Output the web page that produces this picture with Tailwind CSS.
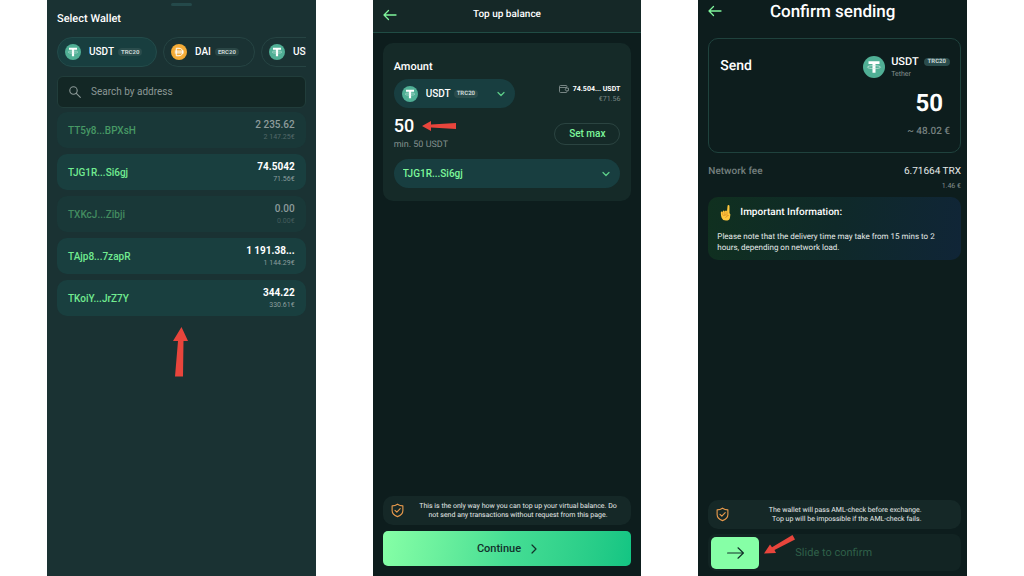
<!DOCTYPE html>
<html lang="en">
    <head>
        <meta charset="UTF-8">
        <meta name="viewport" content="width=device-width, initial-scale=1.0">
        <title>Wallet top up</title>
        <script src="https://cdn.jsdelivr.net/npm/@tailwindcss/browser@4"></script>
    </head>
    <body class="bg-white font-['Roboto','Noto_Sans',sans-serif] text-white [text-rendering:geometricPrecision]">

        <!-- shared icons -->
        <svg class="hidden">
            <symbol id="tether" viewBox="0 0 32 32">
                <circle cx="16" cy="16" r="16" fill="#50af95"/>
                <path fill="#fff" d="M8 7.5h16v4h-5.800v13h-4.400v-13H8z"/>
                <ellipse cx="16" cy="16.200" rx="9.600" ry="2.200" fill="none" stroke="#d5eee6" stroke-width="1"/>
            </symbol>
            <symbol id="dai" viewBox="0 0 32 32">
                <circle cx="16" cy="16" r="16" fill="#f5ac37"/>
                <path fill="none" stroke="#fff" stroke-width="2" d="M10.500 8.500H16c4.500 0 7.500 3 7.500 7.500s-3 7.500-7.500 7.500h-5.500zM7.500 14.200h18M7.500 17.800h18"/>
            </symbol>
            <symbol id="back" viewBox="0 0 14 12">
                <path fill="none" stroke="#7ff59c" stroke-width="1.300" stroke-linecap="round" stroke-linejoin="round" d="M13 6H1M5.500 1.500L1 6l4.500 4.500"/>
            </symbol>
            <symbol id="chevron" viewBox="0 0 8 6">
                <path fill="none" stroke="#5fd08a" stroke-width="1.200" stroke-linecap="round" stroke-linejoin="round" d="M1 1.500l3 3 3-3"/>
            </symbol>
            <symbol id="shield" viewBox="0 0 14 16">
                <g fill="none" stroke="#e99a4c" stroke-width="1.200" stroke-linecap="round" stroke-linejoin="round">
                    <path d="M7 1.200C5.300 2.400 3.300 3 1.200 3v5c0 3.200 2.400 5.400 5.800 6.600 3.400-1.200 5.800-3.400 5.800-6.600V3C10.700 3 8.700 2.400 7 1.200z"/>
                    <path d="M4.300 7.800l2 2 3.600-3.800"/>
                </g>
            </symbol>
        </svg>

        <div class="grid min-h-screen grid-cols-3 gap-[57px] pl-[47px] pr-[57px]">

            <!-- select wallet -->
            <section class="flex min-w-0 flex-col bg-[#1a3233] px-[10px] pt-[3px]">
                <div class="h-[3px] w-[21px] self-center rounded-full bg-[#24494a]"></div>
                <h2 class="mt-[5px] text-[11px] leading-4 font-medium">Select Wallet</h2>

                <div class="mt-[10px] flex gap-[6px] overflow-hidden">
                    <button class="flex h-[30px] w-[100px] shrink-0 items-center rounded-full border border-[#234b4a] bg-[#183e3f] pl-[7px]">
                        <svg class="size-4"><use href="#tether"/></svg>
                        <span class="ml-2 text-[10px] leading-4 font-medium">USDT</span>
                        <span class="ml-1 rounded-full bg-[#2a4c4c] px-[3px] text-[6px] leading-2 font-bold text-[#c9d5d4]">TRC20</span>
                    </button>
                    <button class="flex h-[30px] w-[92px] shrink-0 items-center rounded-full border border-[#264443] pl-[7px]">
                        <svg class="size-4"><use href="#dai"/></svg>
                        <span class="ml-2 text-[10px] leading-4 font-medium">DAI</span>
                        <span class="ml-1 rounded-full bg-[#2a4645] px-[3px] text-[6px] leading-2 font-bold text-[#c9d5d4]">ERC20</span>
                    </button>
                    <button class="flex h-[30px] w-[100px] shrink-0 items-center rounded-full border border-[#264443] pl-[7px]">
                        <svg class="size-4"><use href="#tether"/></svg>
                        <span class="ml-2 text-[10px] leading-4 font-medium">USDT</span>
                    </button>
                </div>

                <label class="mt-[9px] flex h-8 items-center rounded-md border border-[#213d3b] bg-[#132725] pl-[11px]">
                    <svg class="size-3 shrink-0" viewBox="0 0 12 12" fill="none" stroke="#8d9a98" stroke-width="1.100" stroke-linecap="round"><circle cx="4.500" cy="4.500" r="3.700"/><path d="M7.300 7.300l4 4"/></svg>
                    <input type="text" aria-label="Search by address" placeholder="Search by address" class="ml-[10px] min-w-0 flex-1 text-[10px] leading-4 outline-none placeholder:text-[#8b9795]">
                </label>

                <div class="mt-1 flex flex-col gap-[6px]">
                    <button class="flex h-9 items-center justify-between rounded-[10px] bg-[#193838] px-[11px]">
                        <span class="text-[10px] font-medium text-[#479965]">TT5y8...BPXsH</span>
                        <span class="flex flex-col text-right"><span class="text-[10px] leading-[13px] font-medium text-[#8d9b9b]">2 235.62</span><span class="text-[7px] leading-3 text-[#536969]">2 147.25€</span></span>
                    </button>
                    <button class="flex h-9 items-center justify-between rounded-[10px] bg-[#193f3f] px-[11px]">
                        <span class="text-[10px] font-medium text-[#72ec91]">TJG1R...Si6gj</span>
                        <span class="flex flex-col text-right"><span class="text-[10px] leading-[13px] font-bold">74.5042</span><span class="text-[7px] leading-3 text-[#8b9e9e]">71.56€</span></span>
                    </button>
                    <button class="flex h-9 items-center justify-between rounded-[10px] bg-[#193838] px-[11px]">
                        <span class="text-[10px] font-medium text-[#438c60]">TXKcJ...Zibji</span>
                        <span class="flex flex-col text-right"><span class="text-[10px] leading-[13px] font-medium text-[#8d9b9b]">0.00</span><span class="text-[7px] leading-3 text-[#455d5d]">0.00€</span></span>
                    </button>
                    <button class="flex h-9 items-center justify-between rounded-[10px] bg-[#193f3f] px-[11px]">
                        <span class="text-[10px] font-medium text-[#72ec91]">TAjp8...7zapR</span>
                        <span class="flex flex-col text-right"><span class="text-[10px] leading-[13px] font-bold">1 191.38...</span><span class="text-[7px] leading-3 text-[#8b9e9e]">1 144.29€</span></span>
                    </button>
                    <button class="flex h-9 items-center justify-between rounded-[10px] bg-[#193f3f] px-[11px]">
                        <span class="text-[10px] font-medium text-[#72ec91]">TKoiY...JrZ7Y</span>
                        <span class="flex flex-col text-right"><span class="text-[10px] leading-[13px] font-bold">344.22</span><span class="text-[7px] leading-3 text-[#8b9e9e]">330.61€</span></span>
                    </button>
                </div>

                <svg class="mt-[11px] h-[50px] w-4 self-center" viewBox="0 0 16 50"><path fill="#e8453c" d="M8.500 0L15 14H10.500L10 49.500H2L5 14H0z"/></svg>
            </section>

            <!-- top up balance -->
            <section class="flex min-w-0 flex-col bg-[#0d1d1d]">
                <header class="grid h-[33px] grid-cols-[14px_1fr_14px] items-center border-b border-[#204c44] bg-[#152827] px-[10px] pb-[2px]">
                    <a href="#" aria-label="Back"><svg class="h-3 w-[14px]"><use href="#back"/></svg></a>
                    <h2 class="text-center text-[10px] leading-4 font-medium">Top up balance</h2>
                </header>

                <div class="mx-[10px] mt-[10px] rounded-[10px] bg-[#152a28] px-[11px] pt-4 pb-[13px]">
                    <label for="amount" class="block text-[11px] leading-4 font-medium">Amount</label>

                    <div class="mt-1 flex items-center justify-between">
                        <div class="relative h-[29px] w-[121px]">
                            <select aria-label="Currency" class="size-full appearance-none rounded-full bg-[#183e40] pl-8 text-[10px] font-medium outline-none">
                                <option>USDT</option>
                            </select>
                            <div class="pointer-events-none absolute inset-0 flex items-center pr-[10px] pl-2">
                                <svg class="size-4"><use href="#tether"/></svg>
                                <span class="ml-9 rounded-full bg-[#2a4c4c] px-[3px] text-[6px] leading-2 font-bold text-[#c9d5d4]">TRC20</span>
                                <svg class="ml-auto h-[6px] w-2"><use href="#chevron"/></svg>
                            </div>
                        </div>
                        <div class="text-right">
                            <div class="flex items-center gap-1 text-[7px] leading-[10px] font-bold">
                                <svg class="h-2 w-[10px]" viewBox="0 0 10 8" fill="none" stroke="#82908e" stroke-width="0.900"><path d="M8 2.500V1.500Q8 .5 7 .5H1.500Q.5.500.5 1.500v5q0 1 1 1H7q1 0 1-1V6M.5 2.500H8M9.500 3.200H7.500a1.200 1.200 0 000 2.500h2z"/></svg>
                                74.504... USDT
                            </div>
                            <div class="text-[7px] leading-[10px] text-[#7c8987]">€71.56</div>
                        </div>
                    </div>

                    <div class="mt-2 flex items-center justify-between">
                        <div>
                            <div class="flex items-center gap-[6px]">
                                <input id="amount" type="text" value="50" class="h-5 w-[22px] text-[18px] leading-5 font-medium outline-none">
                                <svg class="h-[10px] w-[34px]" viewBox="0 0 34 10"><path fill="#e8453c" d="M0 5L9 0V3.500L34 2V8L9 6.500V10z"/></svg>
                            </div>
                            <div class="mt-1 text-[9px] leading-[11px] text-[#84918f]">min. 50 USDT</div>
                        </div>
                        <button class="h-[22px] w-[66px] rounded-full border border-[#2b4441] text-[10px] leading-4 font-medium text-[#7df79b]">Set max</button>
                    </div>

                    <div class="relative mt-2 h-[29px]">
                        <select aria-label="Wallet address" class="size-full appearance-none rounded-full bg-[#183e40] pl-[9px] text-[10px] font-medium text-[#7df79b] outline-none">
                            <option>TJG1R...Si6gj</option>
                        </select>
                        <div class="pointer-events-none absolute inset-0 flex items-center justify-end pr-[10px]">
                            <svg class="h-[6px] w-2"><use href="#chevron"/></svg>
                        </div>
                    </div>
                </div>

                <div class="mx-[10px] mt-auto flex h-[29px] items-center rounded-[10px] bg-[#152827] pr-[7px] pl-2">
                    <svg class="h-[15px] w-[13px] shrink-0"><use href="#shield"/></svg>
                    <p class="ml-2 flex-1 text-center text-[7px] leading-[9px] text-[#e6ebea]">This is the only way how you can top up your virtual balance. Do<br>not send any transactions without request from this page.</p>
                </div>
                <button class="mx-[10px] mt-[6px] mb-[10px] flex h-[35px] items-center justify-center gap-[10px] rounded-[5px] bg-linear-100 from-[#86ffa6] via-[#45de94] to-[#12c583] text-[11px] leading-4 font-medium text-[#12312a]">
                    Continue
                    <svg class="h-[10px] w-[6px]" viewBox="0 0 6 10" fill="none" stroke="#12312a" stroke-width="1.200" stroke-linecap="round" stroke-linejoin="round"><path d="M1 1l4 4-4 4"/></svg>
                </button>
            </section>

            <!-- confirm sending -->
            <section class="flex min-w-0 flex-col bg-[#0d1d1d] pb-[5px]">
                <header class="grid h-[38px] grid-cols-[14px_1fr_14px] px-[10px]">
                    <a href="#" aria-label="Back" class="pt-[5px]"><svg class="h-3 w-[14px]"><use href="#back"/></svg></a>
                    <h2 class="text-center text-[17px] leading-6 font-medium">Confirm sending</h2>
                </header>

                <div class="mr-[6px] ml-[10px] flex h-[115px] justify-between rounded-[10px] border border-[#1f423d] pt-4 pr-[10px] pl-[11px]">
                    <h3 class="text-[14px] leading-[22px] font-medium">Send</h3>
                    <div class="flex flex-col items-end">
                        <div class="flex items-center">
                            <svg class="size-[22px]"><use href="#tether"/></svg>
                            <div class="ml-[6px]">
                                <div class="flex items-center">
                                    <span class="text-[11px] leading-[14px] font-medium">USDT</span>
                                    <span class="ml-[5px] rounded-full bg-[#2a4c4c] px-1 text-[6px] leading-2 font-bold text-[#c9d5d4]">TRC20</span>
                                </div>
                                <div class="text-[7px] leading-[10px] text-[#84918f]">Tether</div>
                            </div>
                        </div>
                        <div class="mt-[10px] mr-[7px] text-[24px] leading-7 font-bold">50</div>
                        <div class="mt-2 text-[10px] leading-[14px] font-medium text-[#75807f]">~ 48.02 €</div>
                    </div>
                </div>

                <div class="mt-3 mr-[6px] ml-[10px] flex justify-between">
                    <span class="text-[10px] leading-[14px] font-medium text-[#75807f]">Network fee</span>
                    <span class="text-right text-[10px] leading-[14px] text-[#e4e9e8]">6.71664 TRX<br><span class="block text-[7px] text-[#84918f]">1.46 €</span></span>
                </div>

                <div class="mt-1 mr-[6px] ml-[10px] rounded-[10px] bg-linear-100 from-[#10301f] via-[#0f2929] to-[#102537] px-[9px] pt-2 pb-[7px]">
                    <div class="flex items-center">
                        <svg class="ml-[3px] h-4 w-3" viewBox="0 0 12 16">
                            <path fill="#ffc83d" d="M7.500 1.200q0-1.100 1-1.100t1 1.200V8l.9 1.500-.5 3.500q-.5 2.600-4 2.600-3.200 0-4.200-2.500L1 10.500.8 7.500q0-1 .9-1t1 .8q0-1.700 1-1.700t1.200 1.500q0-1.500 1-1.500t1.100.9z"/>
                            <path fill="none" stroke="#d68a22" stroke-width=".7" stroke-linecap="round" d="M2.700 7.500v2.300M4.900 7.200v2.500M7 7v1.800M3.500 10.500q3-1.500 5 0-2 .2-2.800 2"/>
                        </svg>
                        <h3 class="ml-2 text-[10px] leading-4 font-medium">Important Information:</h3>
                    </div>
                    <p class="mt-[10px] text-[8px] leading-[11px] text-[#e6ebea]">Please note that the delivery time may take from 15 mins to 2<br>hours, depending on network load.</p>
                </div>

                <div class="mt-auto mr-[6px] ml-[10px] flex h-[29px] items-center rounded-[10px] bg-[#152827] pl-2">
                    <svg class="h-[15px] w-[13px] shrink-0"><use href="#shield"/></svg>
                    <p class="flex-1 text-center text-[7px] leading-[9px] text-[#e6ebea]"><span class="inline-block text-right">The wallet will pass AML-check before exchange.<br>Top up will be impossible if the AML-check fails.</span></p>
                </div>

                <div class="relative mt-[5px] mr-[6px] ml-[10px] flex h-[37px] items-center rounded-lg bg-[#122423] px-[3px]">
                    <input id="confirm" type="range" min="0" max="100" value="0" class="h-8 w-full appearance-none bg-transparent [&::-webkit-slider-thumb]:h-8 [&::-webkit-slider-thumb]:w-12 [&::-webkit-slider-thumb]:appearance-none [&::-webkit-slider-thumb]:rounded-[5px] [&::-webkit-slider-thumb]:bg-[#86ffa6]">
                    <div class="pointer-events-none absolute inset-0 flex items-center pl-[19px]">
                        <svg class="h-3 w-[17px]" viewBox="0 0 17 12" fill="none" stroke="#12312a" stroke-width="1.200" stroke-linecap="round" stroke-linejoin="round"><path d="M.6 6h15.800M11 .8L16.400 6 11 11.200"/></svg>
                        <svg class="mb-4 ml-5 h-[19px] w-[31px]" viewBox="0 0 31 19"><path fill="#e8453c" d="M0 18.500L6 9.500L8 12.200L28.500 0L31 4.500L10.500 15L12 18z"/></svg>
                        <label for="confirm" class="text-[11px] leading-4 text-[#2f6049]">Slide to confirm</label>
                    </div>
                </div>
            </section>

        </div>
    </body>
</html>
